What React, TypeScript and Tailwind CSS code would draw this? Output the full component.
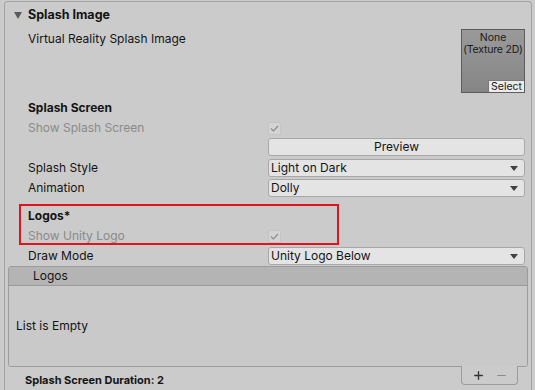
import { Plus, Minus } from 'lucide-react';

const font = { fontFamily: 'Inter, "Noto Sans", sans-serif' };

function Check() {
  return (
    <div className="w-[13px] h-[13px] rounded-[2px] border border-[#c4c4c4] bg-[#d4d4d4] flex items-center justify-center">
      <svg width="9" height="7" viewBox="0 0 9 7">
        <path d="M1 3.5 L3.5 6 L8 1" fill="none" stroke="#8c8c8c" strokeWidth="1.2" />
      </svg>
    </div>
  );
}

function Dropdown({ value }: { value: string }) {
  return (
    <div className="flex-1 h-[18px] rounded-[3px] border border-[#a8a8a8] bg-[#e4e4e4] flex items-center justify-between pl-[2px] pr-[6px]">
      <span>{value}</span>
      <svg width="8" height="5" viewBox="0 0 8 5">
        <path d="M0 0 H8 L4 5 Z" fill="#404040" />
      </svg>
    </div>
  );
}

function Row({
  label,
  muted,
  bold,
  children,
}: {
  label: string;
  muted?: boolean;
  bold?: boolean;
  children?: React.ReactNode;
}) {
  return (
    <div className="h-[20px] flex items-center pl-[23px] pr-[6px]">
      <div
        className={
          'w-[240px] ' +
          (muted ? 'text-[#8a8a8a] ' : '') +
          (bold ? 'font-bold ' : '')
        }
      >
        {label}
      </div>
      <div className="flex-1 flex items-center">{children}</div>
    </div>
  );
}

export default function App() {
  return (
    <div
      className="w-[535px] h-[390px] overflow-hidden bg-[#cbcbcb] text-[12px] text-[#141414] pt-[1px] px-[3px]"
      style={font}
    >
      <div className="relative h-[400px] ml-[1px] border border-b-0 border-[#a3a3a3] rounded-t-[4px] pt-[3px]">
        {/* Splash Image header */}
        <div className="h-[20px] flex items-center pl-[9px]">
          <svg width="8" height="7" viewBox="0 0 8 7" className="mr-[6px]">
            <path d="M0 0 H8 L4 7 Z" fill="#5a5a5a" />
          </svg>
          <span className="font-bold text-[12.5px]">Splash Image</span>
        </div>

        {/* VR splash image */}
        <div className="mt-[4px] flex pl-[23px] pr-[6px]">
          <div className="flex-1 h-[20px] flex items-center">Virtual Reality Splash Image</div>
          <div className="w-[64px] h-[64px] border border-[#5c5c5c] bg-gradient-to-b from-[#9a9a9a] to-[#858585] flex flex-col items-center text-[10.5px] leading-[12px] text-[#1a1a1a] whitespace-nowrap">
            <div className="mt-[2px]">None</div>
            <div className="tracking-[-0.2px]">(Texture 2D)</div>
            <div className="mt-auto self-end bg-[#ebebeb] border-l border-t border-[#7a7a7a] px-[2px] text-[10.5px] leading-[11px] h-[12px]">
              Select
            </div>
          </div>
        </div>

        <div className="h-[5px]" />
        <Row label="Splash Screen" bold />
        <Row label="Show Splash Screen" muted>
          <Check />
        </Row>
        <div className="flex pl-[263px] pr-[6px]">
          <div className="flex-1 h-[18px] rounded-[3px] border border-[#a8a8a8] bg-[#e4e4e4] flex items-center justify-center">
            Preview
          </div>
        </div>
        <div className="h-[2px]" />
        <Row label="Splash Style">
          <Dropdown value="Light on Dark" />
        </Row>
        <Row label="Animation">
          <Dropdown value="Dolly" />
        </Row>
        <div className="h-[8px]" />
        <Row label="Logos*" bold />
        <Row label="Show Unity Logo" muted>
          <Check />
        </Row>
        <Row label="Draw Mode">
          <Dropdown value="Unity Logo Below" />
        </Row>

        {/* Logos list */}
        <div className="mx-[3px] border border-[#9c9c9c] rounded-[3px] overflow-hidden">
          <div className="h-[19px] bg-[#b4b4b4] border-b border-[#9a9a9a] pl-[24px] flex items-center">
            Logos
          </div>
          <div className="h-[80px] bg-[#c9c9c9] flex items-center pl-[7px]">List is Empty</div>
        </div>
        <div className="flex items-start pr-[13px]">
          <div className="flex-1 pl-[20px] pt-[5px] text-[11px] font-bold">Splash Screen Duration: 2</div>
          <div className="relative z-10 -mt-px w-[57px] h-[19px] bg-[#cbcbcb] border border-t-0 border-[#9c9c9c] rounded-b-[4px] flex items-center justify-center gap-[10px]">
            <Plus size={13} strokeWidth={2.5} color="#333" />
            <Minus size={13} strokeWidth={2} color="#8a8a8a" />
          </div>
        </div>

        {/* annotation */}
        <div className="absolute left-[14px] top-[202px] w-[320px] h-[41px] border-2 border-[#e0141e]" />
      </div>
    </div>
  );
}
